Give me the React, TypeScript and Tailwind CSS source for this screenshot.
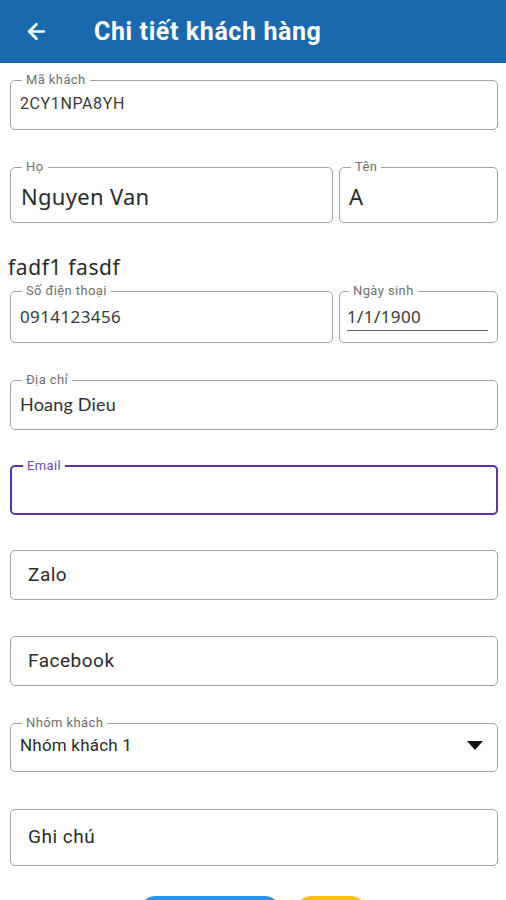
import React from 'react';
import { ArrowLeft } from 'lucide-react';

interface OutlinedProps {
  label: string;
  children: React.ReactNode;
  className?: string;
  focused?: boolean;
}

// Outlined text field with the label sitting in the top border
const Outlined: React.FC<OutlinedProps> = ({ label, children, className = '', focused }) => {
  const border = focused ? 'border-2 border-[#5a35a6]' : 'border border-[#a3a3a3]';
  const labelColor = focused ? 'text-[#6a4bb5]' : 'text-[#6f6f6f]';
  return (
    <fieldset className={`${border} rounded-[5px] pl-[9px] pr-2 min-w-0 ${className}`}>
      <legend className={`ml-[2px] px-[4px] text-[13px] leading-[14px] tracking-[0.4px] ${labelColor}`}>{label}</legend>
      {children}
    </fieldset>
  );
};

const PlainBox: React.FC<{ text: string; h: string }> = ({ text, h }) => (
  <div className={`border border-[#a3a3a3] rounded-[5px] flex items-center pl-[17px] ${h}`}>
    <span className="text-[19px] tracking-[0.5px] text-[#2b2b2b]" style={{ fontFamily: 'Roboto, sans-serif' }}>{text}</span>
  </div>
);

const noto = { fontFamily: '"Noto Sans", sans-serif' };

const App: React.FC = () => {
  return (
    <div className="w-[506px] h-[900px] overflow-hidden bg-white" style={{ fontFamily: 'Roboto, "Noto Sans", sans-serif' }}>
      {/* Header */}
      <div className="h-[63px] bg-[#1b69ad] flex items-center">
        <ArrowLeft className="ml-[24px] text-white" size={25} strokeWidth={2.6} />
        <h1 className="ml-[45px] text-white text-[25px] font-bold tracking-[0.6px] leading-none">Chi tiết khách hàng</h1>
      </div>

      <div className="pl-[10px] pr-[8px]">
        {/* Mã khách */}
        <Outlined label="Mã khách" className="mt-[10px] pt-[7px] pb-[15px]">
          <div className="text-[16px] leading-[20px] tracking-[0.6px] text-[#3a3a3a]">2CY1NPA8YH</div>
        </Outlined>

        {/* Họ / Tên */}
        <div className="flex gap-[6px] mt-[30px]">
          <Outlined label="Họ" className="w-[323px] pt-[8px] pb-[12px]">
            <div className="pl-[1px] text-[22px] leading-[28px] tracking-[0.3px] text-[#2a2a2a]" style={noto}>Nguyen Van</div>
          </Outlined>
          <Outlined label="Tên" className="flex-1 pt-[8px] pb-[12px]">
            <div className="text-[22px] leading-[28px] text-[#2a2a2a]" style={noto}>A</div>
          </Outlined>
        </div>

        <div className="mt-[30px] -ml-[2px] text-[21px] leading-[28px] tracking-[0.6px] text-[#2a2a2a]" style={noto}>
          fadf1 fasdf
        </div>

        {/* Số điện thoại / Ngày sinh */}
        <div className="flex gap-[6px] mt-[3px]">
          <Outlined label="Số điện thoại" className="w-[323px] pt-[9px] pb-[15px]">
            <div className="text-[17px] leading-[20px] tracking-[0.4px] text-[#3a3a3a]" style={noto}>0914123456</div>
          </Outlined>
          <Outlined label="Ngày sinh" className="flex-1 pt-[9px] pb-[10px] !pl-[7px]">
            <div className="mr-[1px] border-b border-[#5c5c5c] pb-[3px] text-[17px] leading-[20px] tracking-[0.4px] text-[#3a3a3a]" style={noto}>1/1/1900</div>
          </Outlined>
        </div>

        {/* Địa chỉ */}
        <Outlined label="Địa chỉ" className="mt-[30px] pt-[7px] pb-[15px]">
          <div className="text-[18px] leading-[20px] tracking-[0.2px] text-[#2f2f2f]" style={{ fontFamily: 'Lato, sans-serif' }}>Hoang Dieu</div>
        </Outlined>

        {/* Email (focused) */}
        <Outlined label="Email" focused className="mt-[29px] pt-[7px] pb-[13px]">
          <div className="h-[20px]" />
        </Outlined>

        <div className="mt-[35px]">
          <PlainBox text="Zalo" h="h-[50px]" />
        </div>
        <div className="mt-[36px]">
          <PlainBox text="Facebook" h="h-[50px]" />
        </div>

        {/* Nhóm khách */}
        <Outlined label="Nhóm khách" className="mt-[30px] pt-[5px] pb-[16px] !pr-[14px]">
          <div className="flex items-center justify-between">
            <span className="text-[17px] leading-[20px] tracking-[0.2px] text-[#2a2a2a]">Nhóm khách 1</span>
            <svg width="16" height="9" viewBox="0 0 16 9">
              <path d="M0 0 L16 0 L8 9 Z" fill="#111" />
            </svg>
          </div>
        </Outlined>

        <div className="mt-[37px]">
          <PlainBox text="Ghi chú" h="h-[57px]" />
        </div>

        {/* Buttons */}
        <div className="flex justify-center gap-[12px] mt-[30px] pr-[3px]">
          <button className="w-[144px] h-[36px] rounded-full bg-[#2196f3]" />
          <button className="w-[74px] h-[36px] rounded-full bg-[#ffc107]" />
        </div>
      </div>
    </div>
  );
};

export default App;
